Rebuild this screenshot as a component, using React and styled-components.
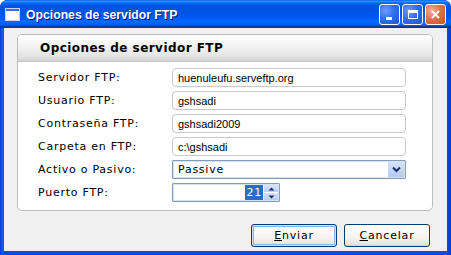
import styled, { createGlobalStyle } from 'styled-components';

const Global = createGlobalStyle`
  html, body { margin: 0; padding: 0; background: #fff; }
  body { width: 451px; height: 255px; overflow: hidden; }
`;

const Window = styled.div`
  width: 451px;
  height: 255px;
  box-sizing: border-box;
  display: flex;
  flex-direction: column;
  border-radius: 7px 7px 0 0;
  background: linear-gradient(to right, #0831d9 0, #1660f0 2px, #0a4be3 4px, #0a4be3 calc(100% - 4px), #0a3bd0 100%);
  padding: 0 4px 4px 4px;
  overflow: hidden;
`;

const TitleBar = styled.div`
  height: 29px;
  margin: 0 -4px;
  padding: 0 5px 0 5px;
  display: flex;
  align-items: center;
  gap: 6px;
  border-radius: 7px 7px 0 0;
  background: linear-gradient(
    to bottom,
    #0058ee 0%, #3593ff 4%, #288eff 6%, #127dff 8%, #036ffc 10%,
    #0262ee 14%, #0057e5 20%, #0054e3 24%, #0055eb 56%, #005bf5 66%,
    #026afe 76%, #0062ef 86%, #0052d6 92%, #0040ab 94%, #003092 100%
  );
`;

const TitleText = styled.span`
  flex: 1;
  color: #fff;
  font-family: 'Liberation Sans', Arial, sans-serif;
  font-weight: bold;
  font-size: 13px;
  transform: scaleX(0.94);
  transform-origin: left center;
  text-shadow: 1px 1px 0 #0a1883;
`;

const Caption = styled.div`
  width: 21px;
  height: 21px;
  box-sizing: border-box;
  border: 1px solid #fff;
  border-radius: 3px;
  display: flex;
  align-items: center;
  justify-content: center;
  background: ${(p) =>
    p.close
      ? 'radial-gradient(circle at 30% 30%, #f3b096 0%, #e4714b 45%, #cc4f26 100%)'
      : 'radial-gradient(circle at 30% 30%, #6f9cfb 0%, #2f6ef3 45%, #1d52d8 100%)'};
`;

const Captions = styled.div`
  display: flex;
  gap: 2px;
`;

const Client = styled.div`
  flex: 1;
  background: #f0f0f0;
  padding: 6px 14px 4px 13px;
  display: flex;
  flex-direction: column;
  font-family: 'DejaVu Sans', Verdana, sans-serif;
`;

const Panel = styled.div`
  background: #fff;
  border: 1px solid #bdbdbd;
  border-radius: 5px;
  height: 177px;
  box-sizing: border-box;
  display: flex;
  flex-direction: column;
  overflow: hidden;
`;

const PanelHeader = styled.div`
  height: 26px;
  display: flex;
  align-items: center;
  padding-left: 22px;
  font-weight: bold;
  font-size: 12px;
  letter-spacing: 0.45px;
  color: #000;
  background: linear-gradient(to bottom, #ffffff 0%, #f4f4f4 40%, #e2e2e2 85%, #d0d0d0 100%);
  border-bottom: 1px solid #c8c8c8;
`;

const Form = styled.div`
  display: grid;
  grid-template-columns: 134px 234px;
  grid-auto-rows: 19px;
  row-gap: 4px;
  padding: 6px 0 0 20px;
  align-items: center;
`;

const Label = styled.label`
  font-size: 11px;
  letter-spacing: 0.75px;
  color: #000;
`;

const Field = styled.div`
  height: 19px;
  box-sizing: border-box;
  border: 1px solid ${(p) => (p.blue ? '#7f9db9' : '#c9c9c9')};
  border-radius: ${(p) => (p.blue ? '1px' : '4px')};
  box-shadow: ${(p) => (p.blue ? 'inset 0 0 0 1px #d7e1ef' : 'none')};
  background: #fff;
  display: flex;
  align-items: center;
  padding-left: 5px;
  font-family: 'Liberation Sans', Arial, sans-serif;
  font-size: 11px;
  color: #000;
  width: ${(p) => p.w || '234px'};
`;

const SelectText = styled.span`
  flex: 1;
  font-family: 'DejaVu Sans', Verdana, sans-serif;
  font-size: 11px;
  letter-spacing: 0.75px;
`;

const DropBtn = styled.div`
  width: 16px;
  height: 15px;
  margin-right: 1px;
  background: linear-gradient(to bottom, #d6e2fd, #b4c9f7);
  display: flex;
  align-items: center;
  justify-content: center;
`;

const SpinValue = styled.span`
  flex: 1;
  display: flex;
  justify-content: flex-end;
  padding-right: 1px;
`;

const Selected = styled.span`
  background: #316ac5;
  color: #fff;
  font-family: 'DejaVu Sans', Verdana, sans-serif;
  font-size: 11px;
  letter-spacing: 0.75px;
  padding: 1px 1px 1px 2px;
`;

const Spin = styled.div`
  width: 14px;
  height: 15px;
  margin-right: 1px;
  display: flex;
  flex-direction: column;
  gap: 1px;
`;

const SpinHalf = styled.div`
  flex: 1;
  background: linear-gradient(to bottom, #d6e2fd, #b9cdf8);
  display: flex;
  align-items: center;
  justify-content: center;
`;

const Footer = styled.div`
  display: flex;
  justify-content: flex-end;
  gap: 7px;
  padding-top: 13px;
  padding-right: 3px;
`;

const Button = styled.button`
  width: 86px;
  height: 23px;
  box-sizing: border-box;
  border: 1px solid #003c74;
  border-radius: 3px;
  background: linear-gradient(to bottom, #ffffff 0%, #f5f4ef 60%, #e3e1d8 100%);
  box-shadow: ${(p) =>
    p.primary ? 'inset 0 0 0 1px #cde1fb, inset 0 0 0 2px #8eb3ec' : 'inset 0 -1px 0 #d6d0c5'};
  font-family: 'DejaVu Sans', Verdana, sans-serif;
  font-size: 11px;
  letter-spacing: 0.8px;
  color: #000;
  padding: 0;
  u { text-decoration: underline; }
`;

const fields = [
  ['Servidor FTP:', 'huenuleufu.serveftp.org'],
  ['Usuario FTP:', 'gshsadi'],
  ['Contraseña FTP:', 'gshsadi2009'],
  ['Carpeta en FTP:', 'c:\\gshsadi'],
];

const WinIcon = () => (
  <svg width="15" height="13" viewBox="0 0 15 13">
    <rect x="0.5" y="0.5" width="14" height="12" fill="#fff" stroke="#c8d4ee" />
    <rect x="1" y="1" width="13" height="2" fill="#3a6fd8" />
  </svg>
);

export default function App() {
  return (
    <>
      <Global />
      <Window>
        <TitleBar>
          <WinIcon />
          <TitleText>Opciones de servidor FTP</TitleText>
          <Captions>
            <Caption>
              <svg width="13" height="13" viewBox="0 0 13 13">
                <rect x="3" y="9" width="6" height="3" fill="#fff" />
              </svg>
            </Caption>
            <Caption>
              <svg width="13" height="13" viewBox="0 0 13 13">
                <rect x="2.5" y="2.5" width="9" height="8" fill="none" stroke="#fff" />
                <rect x="2" y="2" width="10" height="3" fill="#fff" />
              </svg>
            </Caption>
            <Caption close>
              <svg width="13" height="13" viewBox="0 0 13 13">
                <path d="M3 3 L10 10 M10 3 L3 10" stroke="#fff" strokeWidth="2" />
              </svg>
            </Caption>
          </Captions>
        </TitleBar>
        <Client>
          <Panel>
            <PanelHeader>Opciones de servidor FTP</PanelHeader>
            <Form>
              {fields.map(([l, v]) => (
                <>
                  <Label key={l}>{l}</Label>
                  <Field key={v}>{v}</Field>
                </>
              ))}
              <Label>Activo o Pasivo:</Label>
              <Field blue>
                <SelectText>Passive</SelectText>
                <DropBtn>
                  <svg width="9" height="7" viewBox="0 0 9 7">
                    <path d="M1 1.5 L4.5 5 L8 1.5" fill="none" stroke="#1c2f6b" strokeWidth="2" />
                  </svg>
                </DropBtn>
              </Field>
              <Label>Puerto FTP:</Label>
              <Field blue w="108px">
                <SpinValue>
                  <Selected>21</Selected>
                </SpinValue>
                <Spin>
                  <SpinHalf>
                    <svg width="7" height="4" viewBox="0 0 7 4">
                      <path d="M0.5 3.5 L3.5 0.5 L6.5 3.5Z" fill="#1c2f6b" />
                    </svg>
                  </SpinHalf>
                  <SpinHalf>
                    <svg width="7" height="4" viewBox="0 0 7 4">
                      <path d="M0.5 0.5 L3.5 3.5 L6.5 0.5Z" fill="#1c2f6b" />
                    </svg>
                  </SpinHalf>
                </Spin>
              </Field>
            </Form>
          </Panel>
          <Footer>
            <Button primary>
              <u>E</u>nviar
            </Button>
            <Button>
              <u>C</u>ancelar
            </Button>
          </Footer>
        </Client>
      </Window>
    </>
  );
}
